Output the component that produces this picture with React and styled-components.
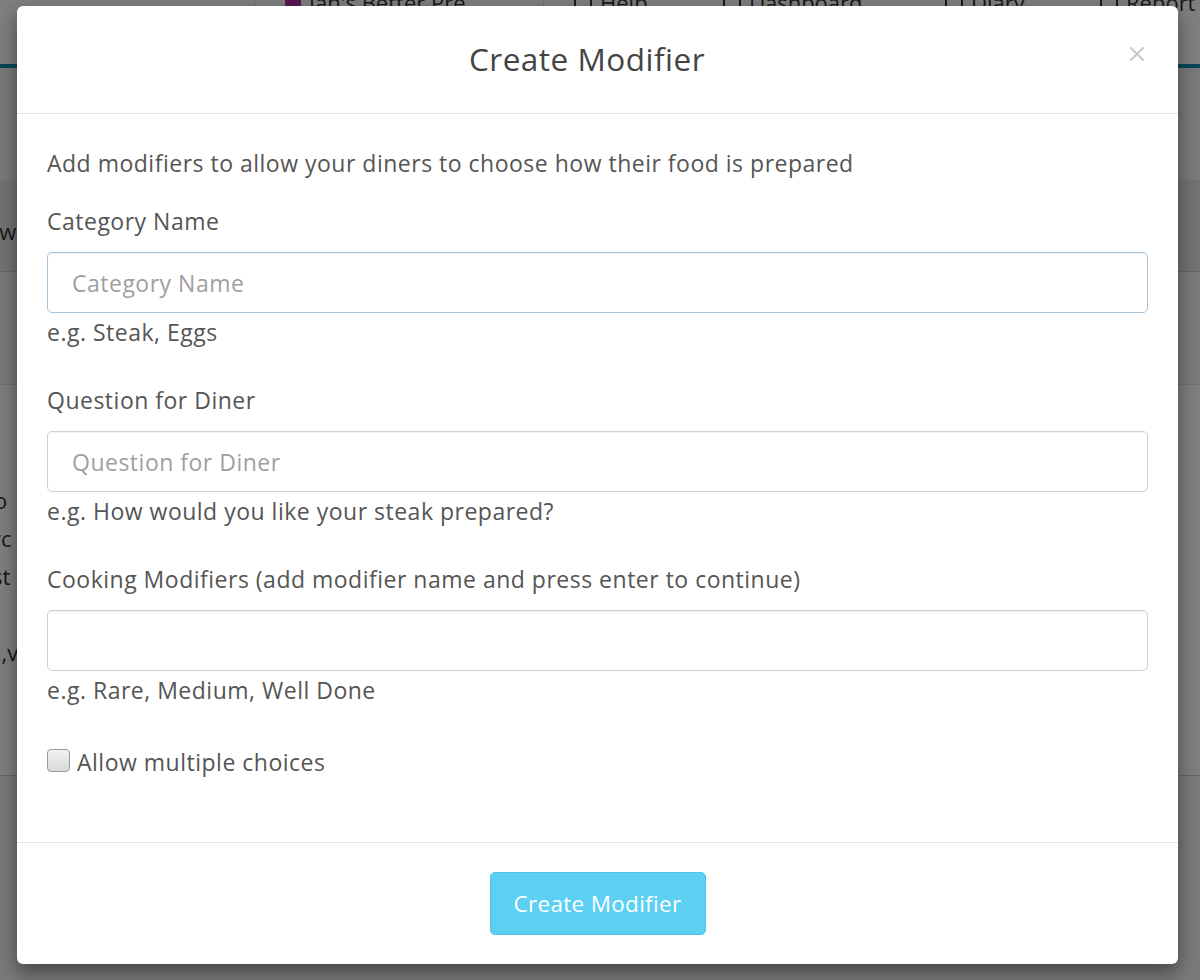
import React from "react";
import styled, { createGlobalStyle } from "styled-components";

const Global = createGlobalStyle`
  html, body { margin: 0; padding: 0; }
  body { font-family: "Open Sans", Lato, sans-serif; background: #f4f4f4; }
  * { box-sizing: border-box; }
`;

const Page = styled.div`
  position: relative;
  width: 1200px;
  height: 980px;
  overflow: hidden;
  background: #f4f4f4;
`;

const TopNav = styled.div`
  height: 68px;
  background: #ffffff;
  border-bottom: 4px solid #0e8eb0;
  display: flex;
  align-items: flex-start;
  padding-left: 254px;
`;

const NavItem = styled.div`
  flex: none;
  display: flex;
  align-items: center;
  gap: 8px;
  height: 24px;
  margin-top: -10px;
  padding: 0 0 0 ${(p) => p.$pad}px;
  width: ${(p) => p.$w}px;
  border-left: ${(p) => (p.$sep ? "1px solid #ddd" : "0")};
  font-family: "Open Sans", sans-serif;
  font-size: 22px;
  color: #333;
  white-space: nowrap;
`;

const Swatch = styled.span`
  width: 16px;
  height: 16px;
  background: #b02aa8;
  flex: none;
`;

const NavIcon = styled.span`
  width: 18px;
  height: 18px;
  border: 2px solid #333;
  border-radius: 2px;
  flex: none;
`;

const SubBar = styled.div`
  margin-top: 112px;
  height: 92px;
  background: #e6e6e6;
  border-bottom: 1px solid #cfcfcf;
  padding: 36px 0 0 0;
  font-family: "Open Sans", sans-serif;
  font-size: 22px;
  color: #333;
`;

const ContentBox = styled.div`
  margin-top: 112px;
  height: 392px;
  background: #ffffff;
  border-top: 1px solid #e0e0e0;
  border-bottom: 1px solid #cfcfcf;
  padding-top: 96px;
  font-family: "Open Sans", sans-serif;
  font-size: 22px;
  line-height: 38px;
  color: #333;
`;

const BgLine = styled.div`
  margin-left: ${(p) => p.$shift}px;
  white-space: nowrap;
  margin-bottom: ${(p) => p.$mb || 0}px;
`;

const Overlay = styled.div`
  position: absolute;
  inset: 0;
  background: rgba(0, 0, 0, 0.5);
`;

const Modal = styled.div`
  position: absolute;
  left: 17px;
  top: 6px;
  width: 1161px;
  height: 958px;
  background: #fff;
  border-radius: 6px;
  box-shadow: 0 8px 20px rgba(0, 0, 0, 0.45);
  display: flex;
  flex-direction: column;
  color: #555;
`;

const Header = styled.div`
  position: relative;
  height: 108px;
  border-bottom: 1px solid #e5e5e5;
  display: flex;
  align-items: center;
  justify-content: center;
  padding-right: 21px;
`;

const Title = styled.h2`
  margin: 0;
  font-size: 31.5px;
  font-weight: 500;
  color: #444;
  letter-spacing: 0.5px;
  padding-bottom: 2px;
`;

const Close = styled.button`
  position: absolute;
  right: 29px;
  top: 36px;
  border: 0;
  background: none;
  padding: 0;
  width: 24px;
  height: 24px;
  cursor: pointer;
`;

const Body = styled.div`
  flex: 1;
  padding: 34px 30px 0 30px;
  display: flex;
  flex-direction: column;
  font-size: 23px;
  letter-spacing: 0.5px;
`;

const Intro = styled.p`
  margin: 0 0 28px 0;
  line-height: 30px;
  color: #555;
`;

const Field = styled.div`
  display: flex;
  flex-direction: column;
  margin-bottom: ${(p) => p.$mb}px;
`;

const Label = styled.label`
  line-height: 30px;
  color: #555;
  margin-bottom: 16px;
`;

const Input = styled.input`
  width: 100%;
  height: 61px;
  border: 1.5px solid ${(p) => (p.$focus ? "#a8c3dc" : "#cfcfcf")};
  border-radius: 5px;
  padding: 0 24px;
  font-family: inherit;
  font-size: 23px;
  letter-spacing: 0.5px;
  color: #555;
  background: #fff;
  box-shadow: inset 0 1px 1px rgba(0, 0, 0, 0.06);
  outline: none;
  &::placeholder { color: #a0a0a0; }
`;

const Hint = styled.div`
  margin-top: 4px;
  line-height: 30px;
  color: #555;
`;

const CheckRow = styled.label`
  display: flex;
  align-items: center;
  gap: 7px;
  line-height: 30px;
  color: #555;
`;

const Box = styled.span`
  width: 23px;
  height: 23px;
  border-radius: 4px;
  border: 1.5px solid #9a9a9a;
  background: linear-gradient(#f2f2f2, #d9d9d9);
  margin-top: -4px;
  flex: none;
`;

const Footer = styled.div`
  height: 122px;
  border-top: 1px solid #e5e5e5;
  display: flex;
  align-items: center;
  justify-content: center;
`;

const Button = styled.button`
  width: 216px;
  height: 63px;
  border: 1px solid #52c2e6;
  border-radius: 5px;
  background: #5bd0f3;
  color: #fff;
  font-family: inherit;
  font-size: 22.5px;
  letter-spacing: 0.3px;
  cursor: pointer;
`;

export default function App() {
  return (
    <Page>
      <Global />
      <TopNav>
        <NavItem $sep $pad={30} $w={289}>
          <Swatch />
          Jan's Better Pre
        </NavItem>
        <NavItem $sep $pad={30} $w={180}>
          <NavIcon />
          Help
        </NavItem>
        <NavItem $pad={0} $w={222}>
          <NavIcon />
          Dashboard
        </NavItem>
        <NavItem $pad={0} $w={155}>
          <NavIcon />
          Diary
        </NavItem>
        <NavItem $pad={0} $w={150}>
          <NavIcon />
          Report
        </NavItem>
      </TopNav>
      <SubBar>
        <BgLine $shift={-14}>ow</BgLine>
      </SubBar>
      <ContentBox>
        <BgLine $shift={-6}>o</BgLine>
        <BgLine $shift={-8}>rc</BgLine>
        <BgLine $shift={-8} $mb={38}>st</BgLine>
        <BgLine $shift={-12}>n,v</BgLine>
      </ContentBox>
      <Overlay />
      <Modal role="dialog">
        <Header>
          <Title>Create Modifier</Title>
          <Close aria-label="Close">
            <svg width="24" height="24" viewBox="0 0 24 24">
              <path d="M6 6 L18 18 M18 6 L6 18" stroke="#c8c8c8" strokeWidth="2" strokeLinecap="round" />
            </svg>
          </Close>
        </Header>
        <Body>
          <Intro>Add modifiers to allow your diners to choose how their food is prepared</Intro>
          <Field $mb={38}>
            <Label>Category Name</Label>
            <Input $focus placeholder="Category Name" />
            <Hint>e.g. Steak, Eggs</Hint>
          </Field>
          <Field $mb={38}>
            <Label>Question for Diner</Label>
            <Input placeholder="Question for Diner" />
            <Hint>e.g. How would you like your steak prepared?</Hint>
          </Field>
          <Field $mb={42}>
            <Label>Cooking Modifiers (add modifier name and press enter to continue)</Label>
            <Input />
            <Hint>e.g. Rare, Medium, Well Done</Hint>
          </Field>
          <CheckRow>
            <Box />
            Allow multiple choices
          </CheckRow>
        </Body>
        <Footer>
          <Button>Create Modifier</Button>
        </Footer>
      </Modal>
    </Page>
  );
}
